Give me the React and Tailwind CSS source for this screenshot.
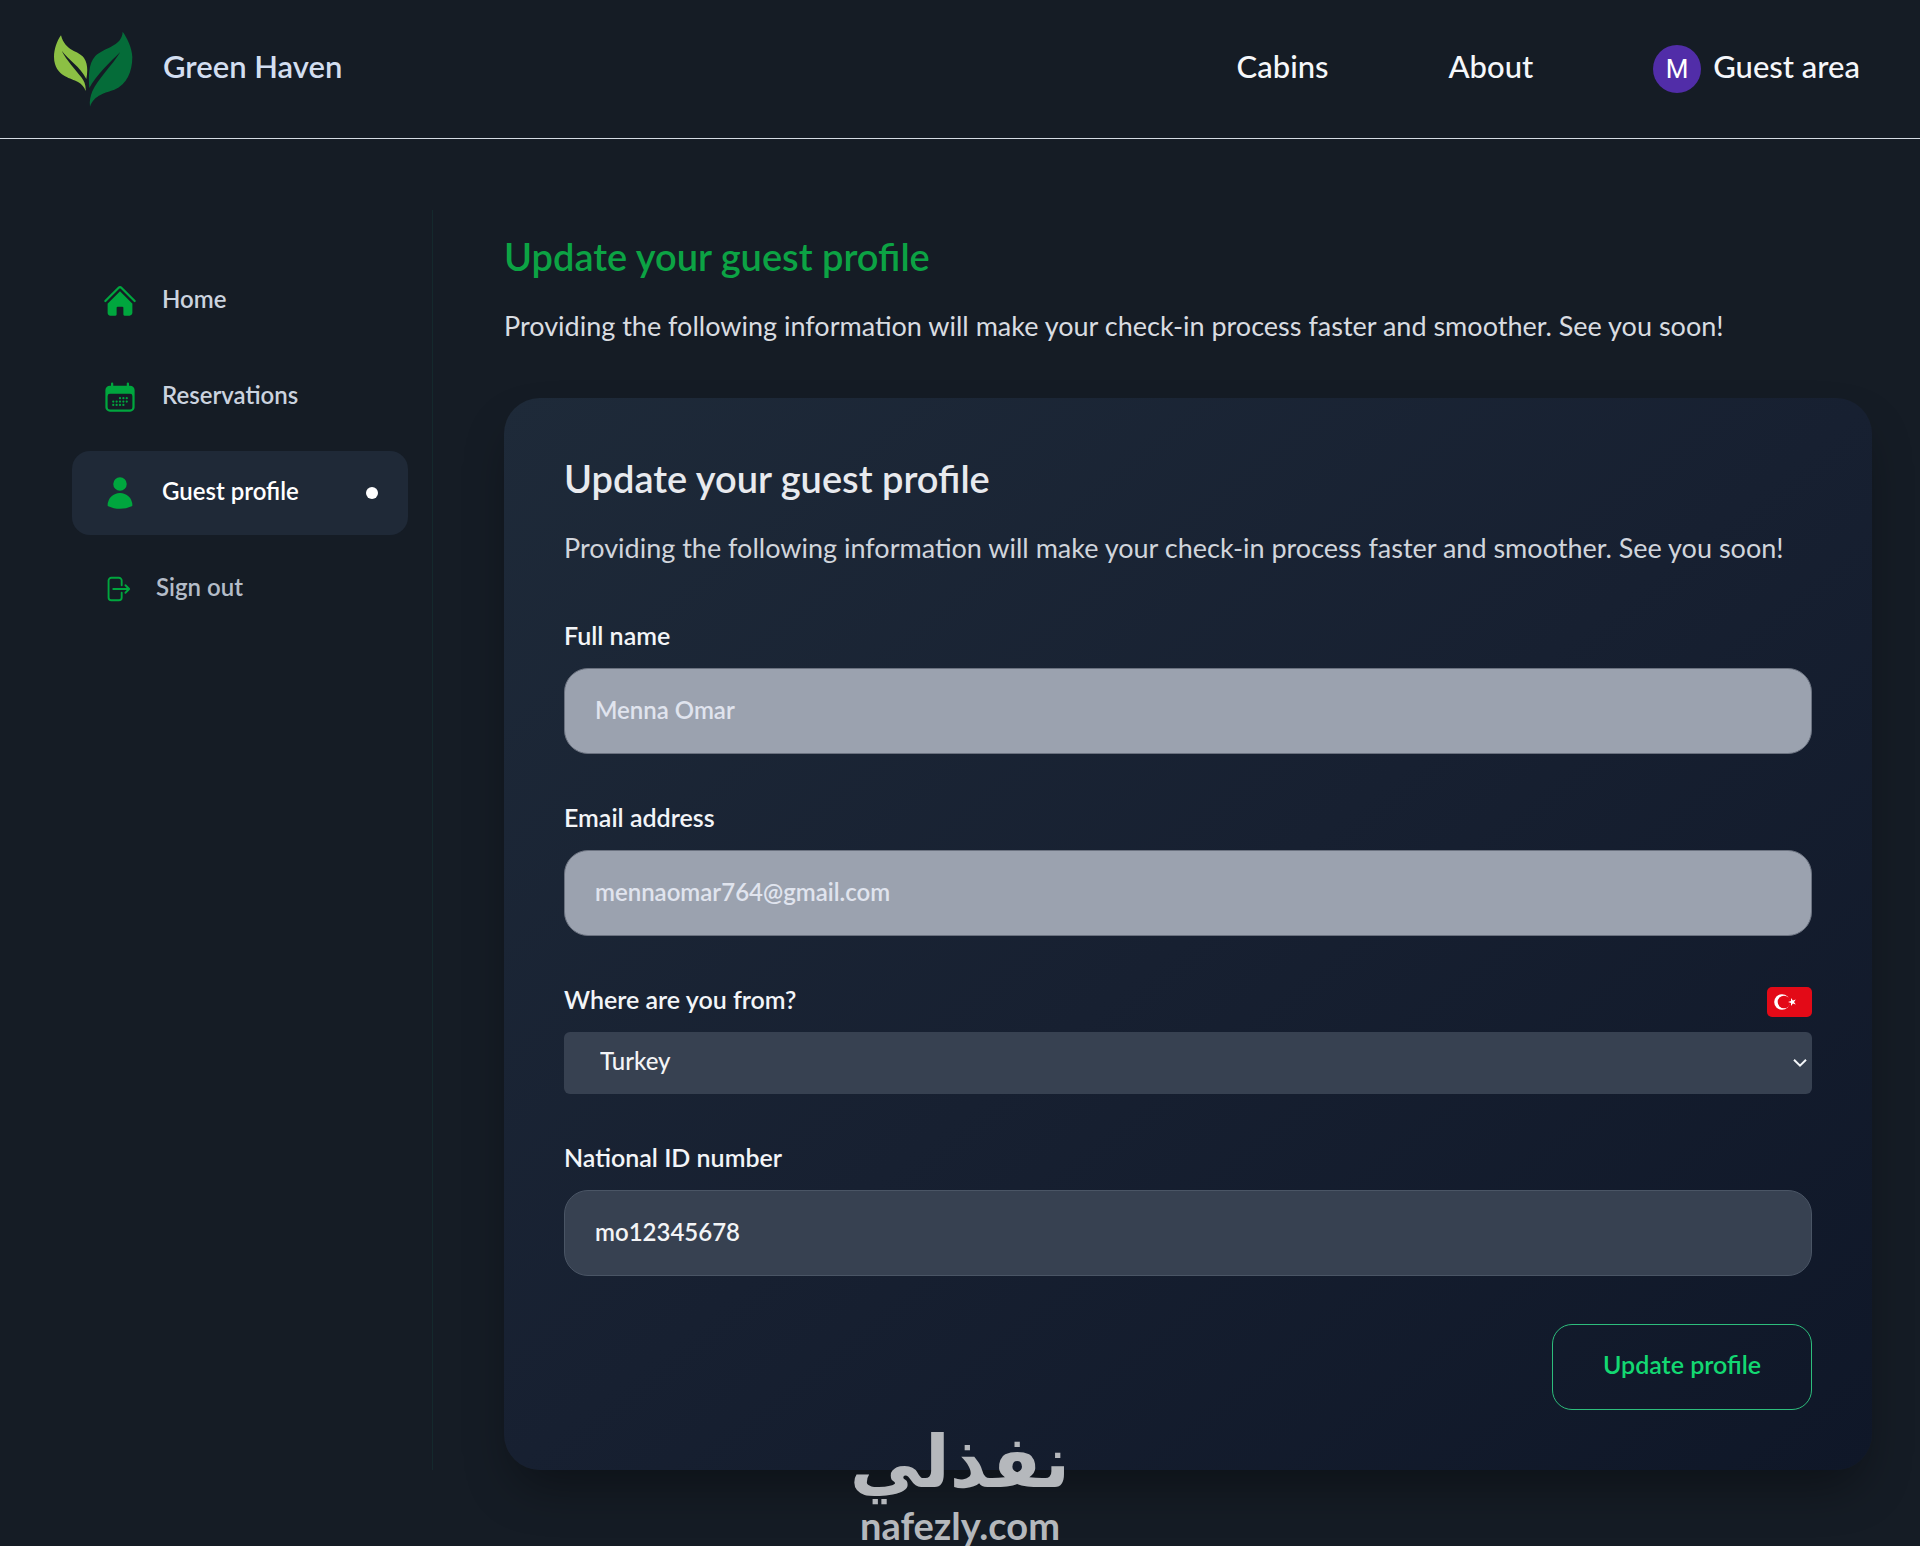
import { useState } from "react";
import {
  HiHome,
  HiCalendarDays,
  HiUser,
  HiOutlineArrowRightOnRectangle,
} from "react-icons/hi2";

const countries = ["Turkey", "Egypt", "Portugal", "Germany", "Spain"];

const sideLinks = [
  { name: "Home", href: "#home", icon: HiHome },
  { name: "Reservations", href: "#reservations", icon: HiCalendarDays },
  { name: "Guest profile", href: "#profile", icon: HiUser, active: true },
];

const inputClass =
  "h-[86px] w-full rounded-3xl border border-[#4a5565] bg-[#374151] px-[30px] pb-1 text-[24px] font-semibold text-gray-100 disabled:border-[#6b7280] disabled:bg-[#9ba2af] disabled:text-[#e0e4ee]";

function Logo() {
  return (
    <a href="#home" className="flex items-center gap-[30px]">
      <svg viewBox="159 95 240 228" className="h-[76px] w-20" aria-hidden="true">
        <path
          fill="#8cc044"
          d="M183 108C166 132 157 168 165 194C176 232 212 236 234 248C246 255 253 264 257 275C258 257 253 246 244 234C225 209 199 182 185 154C205 181 241 202 259 239C263 217 264 194 252 176C236 153 196 158 183 108Z"
        />
        <path
          fill="#056c39"
          d="M368 97C366 142 312 144 286 170C264 193 266 235 268 266C288 229 330 188 361 158C336 199 294 238 277 276C271 291 268 305 270 322C282 286 318 280 343 271C380 256 397 217 397 173C396 145 382 117 368 97Z"
        />
      </svg>
      <span className="pb-1.5 text-[31px] font-semibold text-[#d3def0]">Green Haven</span>
    </a>
  );
}

function Header() {
  return (
    <header className="border-b border-[#d5dbe3] pl-[53px] pr-[60px]">
      <div className="flex h-[138px] items-center justify-between">
        <Logo />
        <nav className="flex items-center gap-[120px] text-[31px] font-medium text-[#f5f7fa]">
          <a href="#cabins" className="pb-1.5">
            Cabins
          </a>
          <a href="#about" className="pb-1.5">
            About
          </a>
          <a href="#account" className="flex items-center gap-3">
            <span className="flex size-12 items-center justify-center rounded-full bg-[#512da8] font-['Roboto',sans-serif] text-[26px] font-normal text-white">
              M
            </span>
            <span className="pb-1.5">Guest area</span>
          </a>
        </nav>
      </div>
    </header>
  );
}

function SideNavigation() {
  return (
    <aside className="w-[361px] shrink-0 border-r border-[#14292d] pr-6 pt-[49px]">
      <ul className="flex flex-col gap-3 text-[24px] font-semibold text-[#cbd3df]">
        {sideLinks.map(({ name, href, icon: Icon, active }) => (
          <li key={name}>
            <a
              href={href}
              className={`flex h-[84px] items-center gap-6 rounded-[18px] px-[30px] ${
                active ? "bg-[#1f2937] text-white" : ""
              }`}
            >
              <Icon className="size-9 shrink-0 text-[#00a63e]" />
              <span className="pb-1">{name}</span>
              {active && <span className="ml-auto size-3 rounded-full bg-white" />}
            </a>
          </li>
        ))}
        <li>
          <button
            type="button"
            className="flex h-[84px] w-full items-center gap-6 px-[30px] text-[#b4bcc8]"
          >
            <HiOutlineArrowRightOnRectangle className="size-[30px] shrink-0 text-[#00a63e]" />
            <span className="pb-1">Sign out</span>
          </button>
        </li>
      </ul>
    </aside>
  );
}

function TurkeyFlag() {
  return (
    <svg viewBox="0 0 45 30" className="h-[30px] w-[45px] rounded-[5px]" role="img" aria-label="Country flag">
      <rect width="45" height="30" fill="#e30a17" />
      <circle cx="15" cy="15" r="7.8" fill="#fff" />
      <circle cx="17" cy="15" r="6.3" fill="#e30a17" />
      <path
        fill="#fff"
        d="M21 15L24 14L24 11L25.9 13.4L28.8 12.4L27 15L28.8 17.6L25.9 16.6L24 19L24 16Z"
      />
    </svg>
  );
}

function Field({ id, label, extra, children }) {
  return (
    <div className="flex flex-col gap-3">
      <div className="flex h-9 items-center justify-between">
        <label htmlFor={id} className="pb-1 text-[25px] font-semibold text-[#f3f5f8]">
          {label}
        </label>
        {extra}
      </div>
      {children}
    </div>
  );
}

function ProfileForm() {
  const [country, setCountry] = useState("Turkey");
  const [nationalID, setNationalID] = useState("mo12345678");

  return (
    <form className="mt-[54px] flex flex-col gap-12" onSubmit={(e) => e.preventDefault()}>
      <Field id="fullName" label="Full name">
        <input id="fullName" disabled defaultValue="Menna Omar" className={inputClass} />
      </Field>

      <Field id="email" label="Email address">
        <input id="email" disabled defaultValue="mennaomar764@gmail.com" className={inputClass} />
      </Field>

      <Field id="country" label="Where are you from?" extra={<TurkeyFlag />}>
        <div className="relative">
          <select
            id="country"
            value={country}
            onChange={(e) => setCountry(e.target.value)}
            className="h-[62px] w-full appearance-none rounded-md bg-[#374151] px-9 pb-1 text-[24px] font-medium text-gray-100"
          >
            {countries.map((c) => (
              <option key={c} value={c}>
                {c}
              </option>
            ))}
          </select>
          <svg
            viewBox="0 0 14 9"
            className="pointer-events-none absolute right-[5px] top-1/2 h-[9px] w-[14px] -translate-y-1/2"
            fill="none"
            stroke="#f3f5f8"
            strokeWidth="2"
            aria-hidden="true"
          >
            <path d="M1 1.2L7 7.2L13 1.2" />
          </svg>
        </div>
      </Field>

      <Field id="nationalID" label="National ID number">
        <input
          id="nationalID"
          value={nationalID}
          onChange={(e) => setNationalID(e.target.value)}
          className={inputClass}
        />
      </Field>

      <div className="flex justify-end">
        <button
          type="submit"
          className="h-[86px] w-[260px] rounded-[20px] border border-[#2dbd7c] pb-1 text-[25px] font-semibold text-[#13d872]"
        >
          Update profile
        </button>
      </div>
    </form>
  );
}

function Watermark() {
  return (
    <div className="pointer-events-none absolute inset-x-0 bottom-0 flex flex-col items-center font-bold text-[#b5b8bc]">
      <span lang="ar" dir="rtl" className="font-['DejaVu_Sans',sans-serif] text-[72px] leading-[84px]">
        نفذلي
      </span>
      <span className="font-['Lato',sans-serif] text-[38px] leading-[42px]">nafezly.com</span>
    </div>
  );
}

export default function App() {
  return (
    <div className="relative min-h-screen bg-[#151c25] font-['Lato',sans-serif]">
      <Header />
      <div className="flex gap-[71px] pb-[72px] pl-[72px] pr-12 pt-[71px]">
        <SideNavigation />
        <main className="min-w-0 flex-1 pt-[22px]">
          <h2 className="text-[38px] font-semibold leading-[48px] text-[#0ca344]">
            Update your guest profile
          </h2>
          <p className="mt-7 text-[27px] leading-9 text-[#d9dce1]">
            Providing the following information will make your check-in process faster and smoother. See you soon!
          </p>

          <section className="mt-[54px] rounded-[36px] bg-linear-to-br from-[#1e2a39] via-[#172031] to-[#0f1728] px-[60px] pb-[60px] pt-14 shadow-2xl shadow-black/40">
            <h2 className="text-[38px] font-semibold leading-[48px] text-[#e8eaee]">
              Update your guest profile
            </h2>
            <p className="mt-7 text-[27px] leading-9 text-[#d1d5dc]">
              Providing the following information will make your check-in process faster and smoother. See you soon!
            </p>
            <ProfileForm />
          </section>
        </main>
      </div>
      <Watermark />
    </div>
  );
}
